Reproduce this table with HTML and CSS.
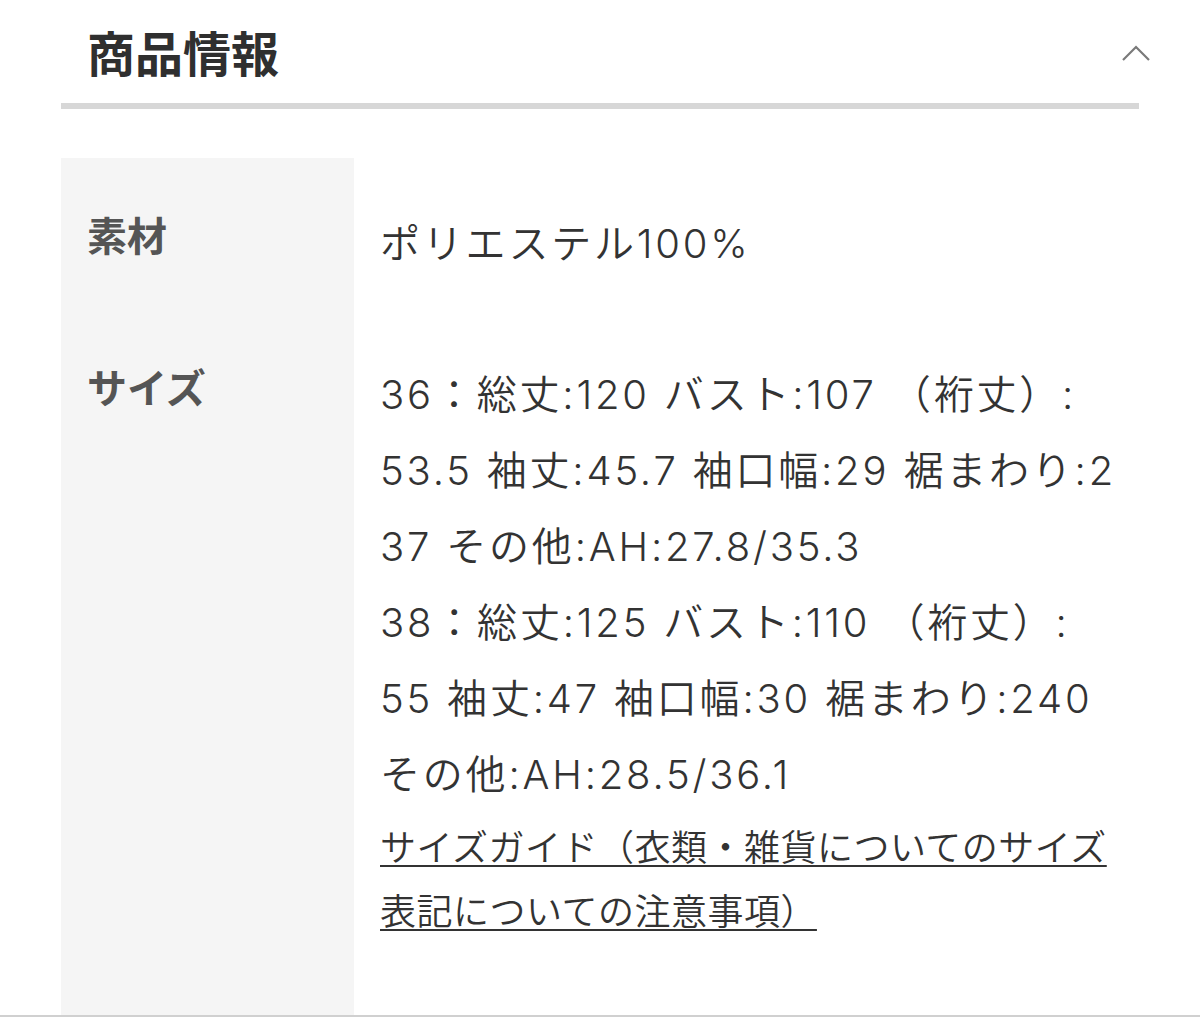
FILE: index.html
```html
<!DOCTYPE html>
<html lang="ja">
<head>
<meta charset="utf-8">
<title>商品情報</title>
<link rel="stylesheet" href="styles.css">
</head>
<body>
<div class="page">
  <header class="section-head">
    <h2 class="section-title">商品情報</h2>
    <svg class="chevron" width="30" height="18" viewBox="0 0 30 18" aria-hidden="true">
      <polyline points="2,16 15,3 28,16" fill="none" stroke="#7a7a7a" stroke-width="2.2"/>
    </svg>
  </header>
  <div class="divider"></div>
  <div class="spec">
    <div class="spec-label first">素材</div>
    <div class="spec-value first">ポリエステル100%</div>
    <div class="spec-label last">サイズ</div>
    <div class="spec-value last">
      <p class="size-text">36：総丈:120 バスト:107 （裄丈）:<br>53.5 袖丈:45.7 袖口幅:29 裾まわり:2<br>37 その他:AH:27.8/35.3<br>38：総丈:125 バスト:110 （裄丈）:<br>55 袖丈:47 袖口幅:30 裾まわり:240<br>その他:AH:28.5/36.1</p>
      <a class="size-link" href="#">サイズガイド（衣類・雑貨についてのサイズ<br>表記についての注意事項）</a>
    </div>
  </div>
</div>
<div class="page-end"></div>
</body>
</html>
```

FILE: styles.css
```css
* {
  box-sizing: border-box;
}

body {
  margin: 0;
  background: #ffffff;
  font-family: "Inter", "Noto Sans CJK JP", sans-serif;
  color: #333333;
}

.page {
  padding: 0 61px;
}

.section-head {
  display: flex;
  align-items: center;
  justify-content: space-between;
  height: 103px;
  padding: 0 0 2px 26px;
}

.section-title {
  margin: 0;
  font-family: "Noto Sans CJK JP", sans-serif;
  font-size: 48px;
  font-weight: 700;
  line-height: 1;
  color: #2f2f2f;
}

.chevron {
  display: block;
  margin-right: -12px;
  margin-top: 4px;
}

.divider {
  height: 6px;
  background: #d7d7d7;
}

.spec {
  display: grid;
  grid-template-columns: 293px 1fr;
  margin-top: 49px;
}

.spec-label {
  background: #f5f5f5;
  padding: 37px 26px 38px;
  font-family: "Noto Sans CJK JP", sans-serif;
  font-size: 40px;
  font-weight: 700;
  line-height: 60px;
  color: #555555;
}

.spec-value {
  padding: 38px 0 37px 26px;
  font-size: 40px;
  font-weight: 350;
  line-height: 76px;
  letter-spacing: 2.8px;
  color: #333333;
}

.spec-label.first {
  padding-top: 46px;
}

.spec-value.first {
  padding-top: 48px;
}

.spec-label.last,
.spec-value.last {
  padding-bottom: 74px;
}

.size-text {
  margin: 0;
}

.size-link {
  display: block;
  font-family: "Noto Sans CJK JP", sans-serif;
  font-size: 36px;
  font-weight: 350;
  line-height: 64px;
  letter-spacing: 0.5px;
  color: #333333;
  text-decoration: underline;
  text-decoration-thickness: 2px;
  text-underline-offset: 4px;
}

.page-end {
  height: 2px;
  background: #d0d0d0;
}
```
